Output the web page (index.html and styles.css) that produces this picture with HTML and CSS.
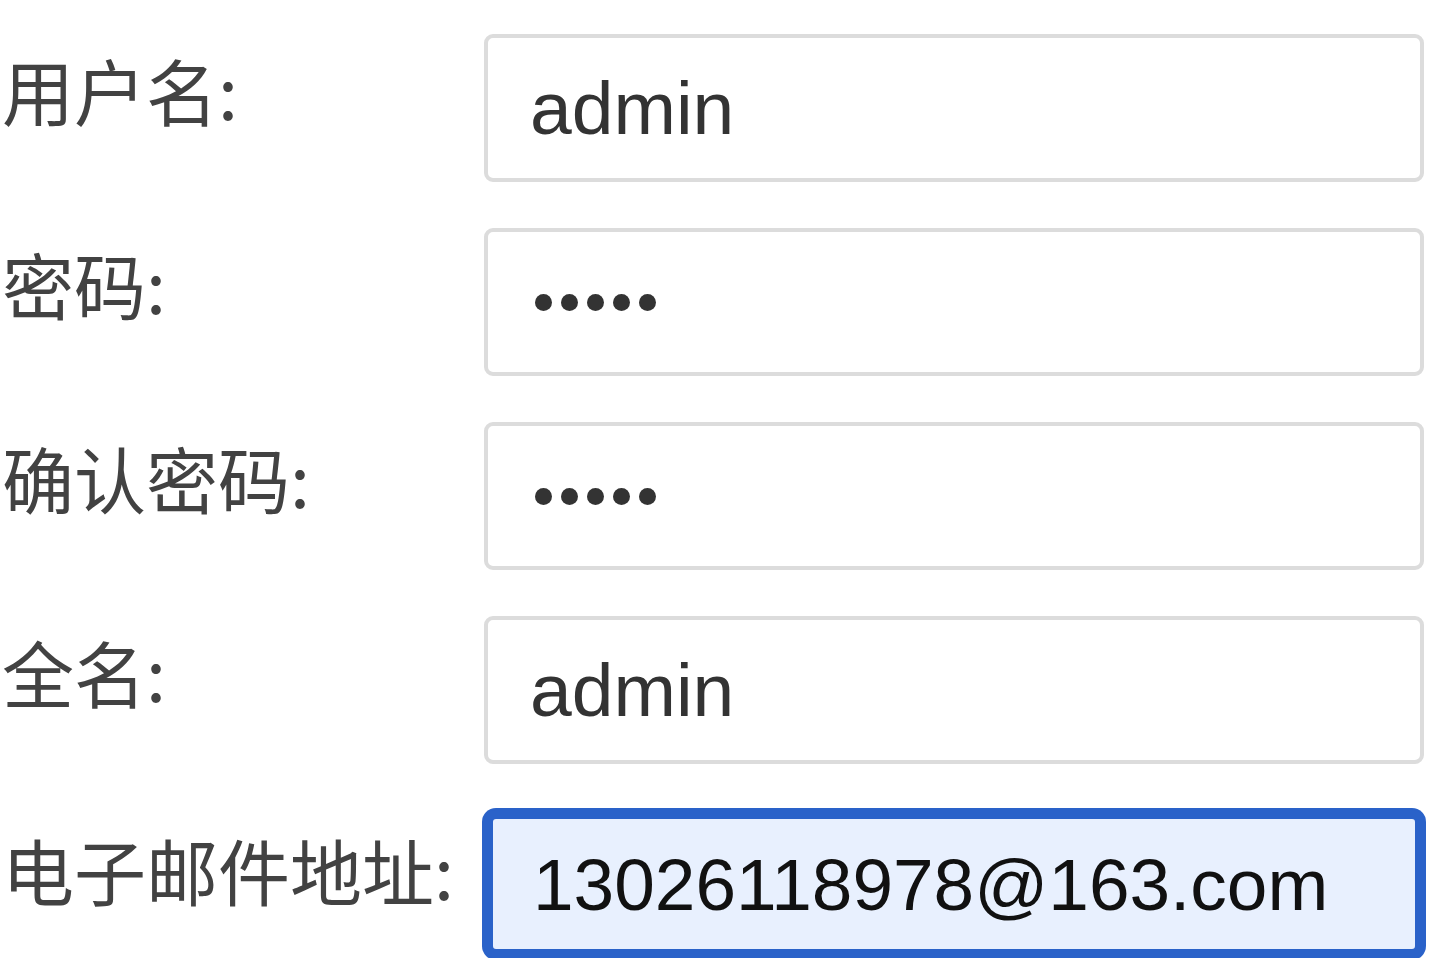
FILE: index.html
```html
<!DOCTYPE html>
<html lang="zh-CN">
<head>
<meta charset="utf-8">
<title>用户注册</title>
<link rel="stylesheet" href="styles.css">
</head>
<body>
<form class="form">
  <div class="row">
    <label class="label">用户名:</label>
    <div class="field"><span class="value">admin</span></div>
  </div>
  <div class="row">
    <label class="label">密码:</label>
    <div class="field"><span class="dots"><i></i><i></i><i></i><i></i><i></i></span></div>
  </div>
  <div class="row">
    <label class="label">确认密码:</label>
    <div class="field"><span class="dots"><i></i><i></i><i></i><i></i><i></i></span></div>
  </div>
  <div class="row">
    <label class="label">全名:</label>
    <div class="field"><span class="value">admin</span></div>
  </div>
  <div class="row">
    <label class="label label-email">电子邮件地址:</label>
    <div class="field field-focus"><span class="value value-auto">13026118978@163.com</span></div>
  </div>
</form>
</body>
</html>
```
FILE: styles.css
```css
html, body {
  margin: 0;
  padding: 0;
  background: #ffffff;
}

.form {
  display: flex;
  flex-direction: column;
  gap: 46px;
  padding: 34px 26px 0 2px;
}

.row {
  display: flex;
  align-items: flex-start;
}

.label {
  width: 482px;
  flex: none;
  font-family: "Noto Sans CJK SC", "Liberation Sans", sans-serif;
  font-size: 72px;
  font-weight: 400;
  line-height: 1;
  color: #424242;
  padding-top: 19px;
  white-space: nowrap;
}

.label-email {
  padding-top: 23px;
}

.field {
  flex: 1;
  height: 148px;
  box-sizing: border-box;
  border: 4px solid #dcdcdc;
  border-radius: 9px;
  background: #ffffff;
  display: flex;
  align-items: center;
  padding-left: 42px;
}

.field-focus {
  border: 9px solid #2a62c9;
  box-shadow: 0 0 0 2px #2a62c9;
  border-radius: 12px;
  background: #e8f0fe;
  padding-left: 40px;
}

.value {
  font-family: "Liberation Sans", Arial, sans-serif;
  font-size: 75px;
  color: #333333;
  white-space: nowrap;
}

.value-auto {
  font-size: 73px;
  color: #111111;
}

.dots {
  display: flex;
  gap: 9px;
  padding-left: 5px;
}

.dots i {
  display: block;
  width: 17px;
  height: 17px;
  border-radius: 50%;
  background: #333333;
}
```
